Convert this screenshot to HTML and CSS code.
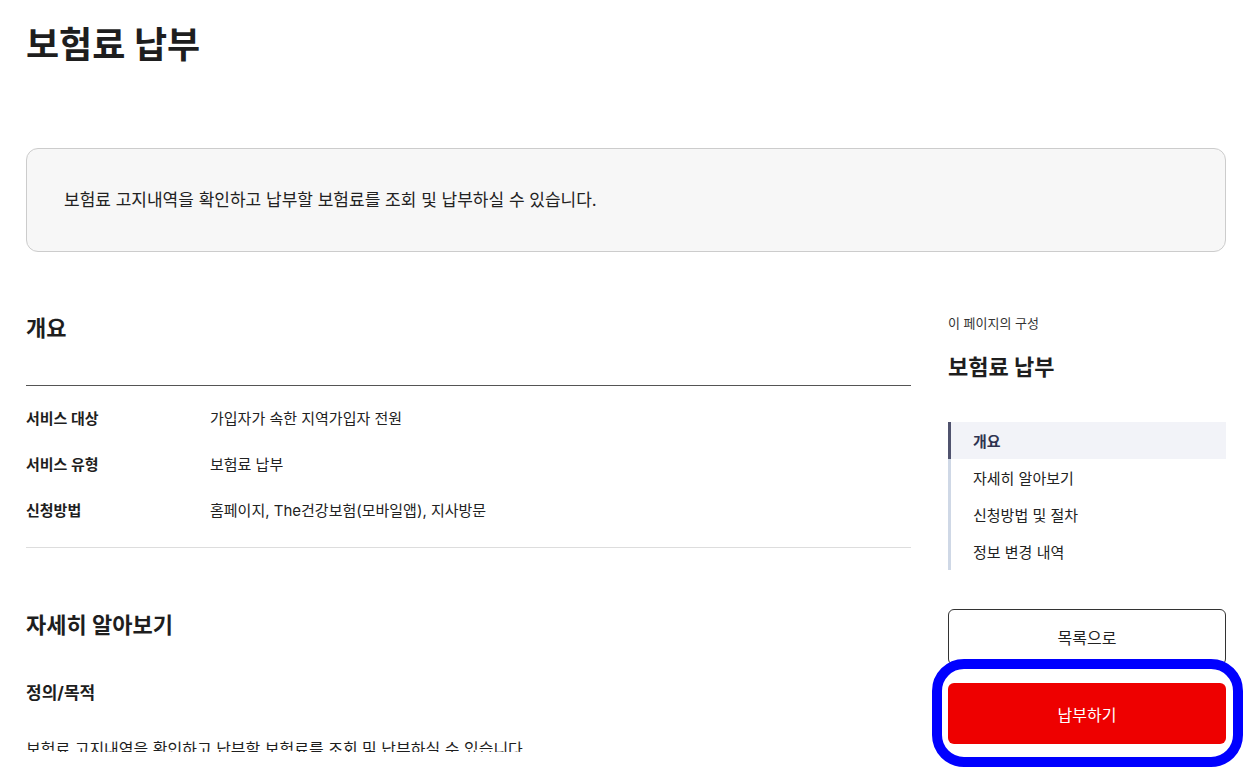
FILE: index.html
```html
<!DOCTYPE html>
<html lang="ko">
<head>
  <meta charset="UTF-8" />
  <meta name="viewport" content="width=device-width, initial-scale=1" />
  <title>보험료 납부</title>
  <link rel="stylesheet" href="styles.css">
</head>
<body>

  <div class="page">
    <h1 class="page-title">보험료 납부</h1>

    <div class="summary-box">
      보험료 고지내역을 확인하고 납부할 보험료를 조회 및 납부하실 수 있습니다.
    </div>

    <div class="layout">
      <main class="content">
        <section class="section">
          <h2>개요</h2>
          <dl class="info-table">
            <div class="info-row">
              <dt>서비스 대상</dt>
              <dd>가입자가 속한 지역가입자 전원</dd>
            </div>
            <div class="info-row">
              <dt>서비스 유형</dt>
              <dd>보험료 납부</dd>
            </div>
            <div class="info-row">
              <dt>신청방법</dt>
              <dd>홈페이지, The건강보험(모바일앱), 지사방문</dd>
            </div>
          </dl>
        </section>

        <section class="section detail">
          <h2>자세히 알아보기</h2>
          <h3>정의/목적</h3>
          <p>보험료 고지내역을 확인하고 납부할 보험료를 조회 및 납부하실 수 있습니다.</p>
        </section>
      </main>

      <aside class="side">
        <p class="side-label">이 페이지의 구성</p>
        <h2 class="side-title">보험료 납부</h2>
        <ul class="side-nav">
          <li class="active"><a href="#">개요</a></li>
          <li><a href="#">자세히 알아보기</a></li>
          <li><a href="#">신청방법 및 절차</a></li>
          <li><a href="#">정보 변경 내역</a></li>
        </ul>
        <button type="button" class="btn-list">목록으로</button>
        <div class="pay-wrap">
          <button type="button" class="btn-pay">납부하기</button>
          <span class="highlight-ring"></span>
        </div>
      </aside>
    </div>
  </div>

</body>
</html>
```

FILE: styles.css
```css
* {
  box-sizing: border-box;
  font-family: Inter, 'Noto Sans CJK KR', sans-serif;
}

body {
  margin: 0;
  min-height: 770px;
  background: #ffffff;
  color: #1e1e1e;
}

.page {
  padding: 22px 20px 18px 26px;
}

.page-title {
  margin: 0;
  font-size: 36px;
  line-height: 47px;
  font-weight: 700;
  color: #1e1e1e;
}

.summary-box {
  margin-top: 79px;
  padding: 38px 37px;
  background-color: #f7f7f7;
  border: 1px solid #cccccc;
  border-radius: 12px;
  font-size: 17px;
  line-height: 26px;
  color: #222;
}

.layout {
  display: flex;
  gap: 37px;
  margin-top: 48px;
}

.content {
  flex: 1;
  height: 452px;
  overflow: hidden;
}

.section h2 {
  margin: 12px 0 0;
  font-size: 22px;
  line-height: 32px;
  font-weight: 700;
}

.info-table {
  margin: 41px 0 0;
  padding: 10px 0 13px;
  border-top: 1px solid #555;
  border-bottom: 1px solid #dddddd;
}

.info-row {
  display: flex;
  padding: 12px 0;
  font-size: 15px;
  line-height: 22px;
}

.info-row dt {
  width: 184px;
  font-weight: 700;
}

.info-row dd {
  margin: 0;
  color: #222;
}

.detail h2 {
  margin-top: 61px;
}

.detail h3 {
  margin: 39px 0 0;
  font-size: 17px;
  line-height: 26px;
  font-weight: 700;
}

.detail p {
  margin: 30px 0 0;
  font-size: 16px;
  line-height: 26px;
}

.side {
  width: 278px;
  flex-shrink: 0;
  padding-top: 13px;
}

.side-label {
  margin: 0;
  font-size: 13px;
  line-height: 20px;
  color: #333;
}

.side-title {
  margin: 18px 0 0;
  font-size: 22px;
  line-height: 32px;
  font-weight: 700;
}

.side-nav {
  list-style: none;
  margin: 39px 0 0;
  padding: 0;
  border-left: 3px solid #cfd8e6;
}

.side-nav li {
  height: 37px;
  display: flex;
  align-items: center;
}

.side-nav a {
  padding-left: 22px;
  font-size: 15px;
  color: #222;
  text-decoration: none;
}

.side-nav li.active {
  background-color: #f2f3f8;
  box-shadow: -3px 0 0 #50536e;
}

.side-nav li.active a {
  font-weight: 600;
  color: #2f3350;
}

.btn-list,
.btn-pay {
  display: block;
  width: 100%;
  border-radius: 6px;
  font-size: 16px;
  cursor: pointer;
}

.btn-list {
  margin-top: 39px;
  height: 56px;
  background: #ffffff;
  border: 1px solid #333;
  color: #222;
}

.pay-wrap {
  position: relative;
  margin-top: 18px;
}

.btn-pay {
  height: 61px;
  background-color: #ee0000;
  border: none;
  color: #fff;
}

.highlight-ring {
  position: absolute;
  top: -24px;
  bottom: -23px;
  left: -16px;
  right: -17px;
  border: 10px solid #0000ff;
  border-radius: 32px;
  pointer-events: none;
}
```
